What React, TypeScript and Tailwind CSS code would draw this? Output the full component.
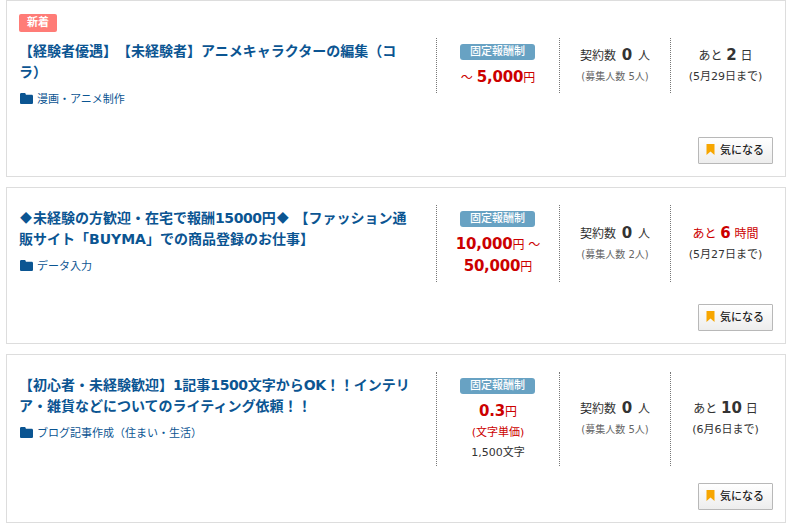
import React from 'react';

interface Job {
  isNew?: boolean;
  title: React.ReactNode;
  category: string;
  price: React.ReactNode;
  recruits: number;
  left: { value: number; unit: string; urgent?: boolean };
  deadline: string;
  height: string;
}

const Amount: React.FC<{ children: React.ReactNode }> = ({ children }) => (
  <b className="text-[15px] leading-none tracking-[-0.2px]">{children}</b>
);

const Diamond: React.FC = () => (
  <span className="inline-block w-[14px] text-center font-['Noto_Sans_CJK_JP',sans-serif] text-[12px] leading-none">◆</span>
);

const Latin: React.FC<{ children: React.ReactNode }> = ({ children }) => (
  <span className="tracking-[-0.4px]">{children}</span>
);

const jobs: Job[] = [
  {
    isNew: true,
    title: (
      <>
        【経験者優遇】【未経験者】アニメキャラクターの編集（コ
        <br />
        ラ）
      </>
    ),
    category: '漫画・アニメ制作',
    price: (
      <div className="h-[22px]">
        ～ <Amount>5,000</Amount>円
      </div>
    ),
    recruits: 5,
    left: { value: 2, unit: '日' },
    deadline: '5月29日',
    height: 'h-[177px]',
  },
  {
    title: (
      <>
        <Diamond />
        未経験の方歓迎・在宅で報酬<Latin>15000</Latin>円
        <Diamond /> 【ファッション通
        <br />
        販サイト「BUYMA」での商品登録のお仕事】
      </>
    ),
    category: 'データ入力',
    price: (
      <>
        <div className="h-[22px]">
          <Amount>10,000</Amount>円 ～
        </div>
        <div className="h-[22px]">
          <Amount>50,000</Amount>円
        </div>
      </>
    ),
    recruits: 2,
    left: { value: 6, unit: '時間', urgent: true },
    deadline: '5月27日',
    height: 'h-[157px]',
  },
  {
    title: (
      <>
        【初心者・未経験歓迎】<Latin>1</Latin>記事<Latin>1500</Latin>文字から<Latin>OK</Latin>！！インテリ
        <br />
        ア・雑貨などについてのライティング依頼！！
      </>
    ),
    category: 'ブログ記事作成（住まい・生活）',
    price: (
      <>
        <div className="h-[22px]">
          <Amount>0.3</Amount>円
        </div>
        <div className="text-[11px] leading-5">(文字単価)</div>
        <div className="text-[11px] leading-[19px] text-[#333]">1,500文字</div>
      </>
    ),
    recruits: 5,
    left: { value: 10, unit: '日' },
    deadline: '6月6日',
    height: 'h-[169px]',
  },
];

const FolderIcon: React.FC = () => (
  <svg className="mr-1 mb-[3px] ml-px h-[11px] w-[13px]" viewBox="0 0 13 11" fill="currentColor">
    <path d="M1.300 0h3.200c.7 0 1.300.6 1.300 1.300v.4h5.900c.7 0 1.300.6 1.300 1.300v6.700c0 .7-.6 1.300-1.300 1.300H1.300C.6 11 0 10.400 0 9.700V1.300C0 .6.6 0 1.300 0z" />
  </svg>
);

const JobCard: React.FC<{ job: Job }> = ({ job }) => (
  <li className={`flex w-[780px] flex-col border border-[#ddd] bg-white px-3 pt-[13px] pb-3 ${job.height}`}>
    {job.isNew ? (
      <span className="mb-1.5 h-[18px] w-[38px] shrink-0 rounded-[2px] bg-[#ff7c77] text-center text-[11px] leading-[18px] font-bold text-white">
        新着
      </span>
    ) : (
      <span className="h-1 shrink-0" />
    )}

    <div className="flex items-start">
      {/* Title & category */}
      <div className="w-[417px] shrink-0 pt-[3px] text-[#0b5592]">
        <h3 className="text-[14px] leading-[21px] font-bold whitespace-nowrap">{job.title}</h3>
        <p className="mt-[7px] flex h-5 items-center text-[11px] leading-5">
          <FolderIcon />
          {job.category}
        </p>
      </div>

      {/* Price, contracts, time left */}
      <div className="flex text-center text-[12px] whitespace-nowrap text-[#333]">
        <div className="w-[123px] border-l border-dotted border-[#777] pt-1.5 pb-1 leading-[22px] text-[#c00]">
          <div className="mb-[7px] ml-[23px] h-4 w-[75px] rounded-[3px] bg-[#68a2c3] text-[11px] leading-4 font-medium text-white">
            固定報酬制
          </div>
          {job.price}
        </div>
        <div className="flex w-[111px] flex-col justify-center border-l border-dotted border-[#777]">
          <div className="h-[22px] leading-[22px]">
            契約数 <b className="mx-0.5 text-[15px] leading-none">0</b> 人
          </div>
          <div className="text-[10px] leading-5 text-[#666]">(募集人数 {job.recruits}人)</div>
        </div>
        <div className="flex w-[110px] flex-col justify-center border-l border-dotted border-[#777]">
          <div className={job.left.urgent ? 'h-[22px] leading-[22px] text-[#c00]' : 'h-[22px] leading-[22px]'}>
            あと <b className="text-[15px] leading-none">{job.left.value}</b> {job.left.unit}
          </div>
          <div className="text-[11px] leading-5">({job.deadline}まで)</div>
        </div>
      </div>
    </div>

    <button className="mt-auto flex h-[27px] w-[75px] items-center self-end rounded-[1px] border border-[#b8b8b8] bg-linear-to-b from-white to-[#ededed] pl-[7px] text-[11px] font-medium text-[#222]">
      <svg className="mr-[5px] mb-0.5 h-[11px] w-[9px]" viewBox="0 0 9 11" fill="#f7a600">
        <path d="M.5 0h8v11L4.500 7.500.5 11z" />
      </svg>
      <span className="pt-px">気になる</span>
    </button>
  </li>
);

export default function App() {
  return (
    <div className="h-[524px] overflow-hidden bg-white font-['DejaVu_Sans','Noto_Sans_CJK_JP',sans-serif] [text-spacing-trim:space-all]">
      <ul className="ml-1.5 flex flex-col gap-2.5">
        {jobs.map((job) => (
          <JobCard key={job.category} job={job} />
        ))}
      </ul>
    </div>
  );
}
